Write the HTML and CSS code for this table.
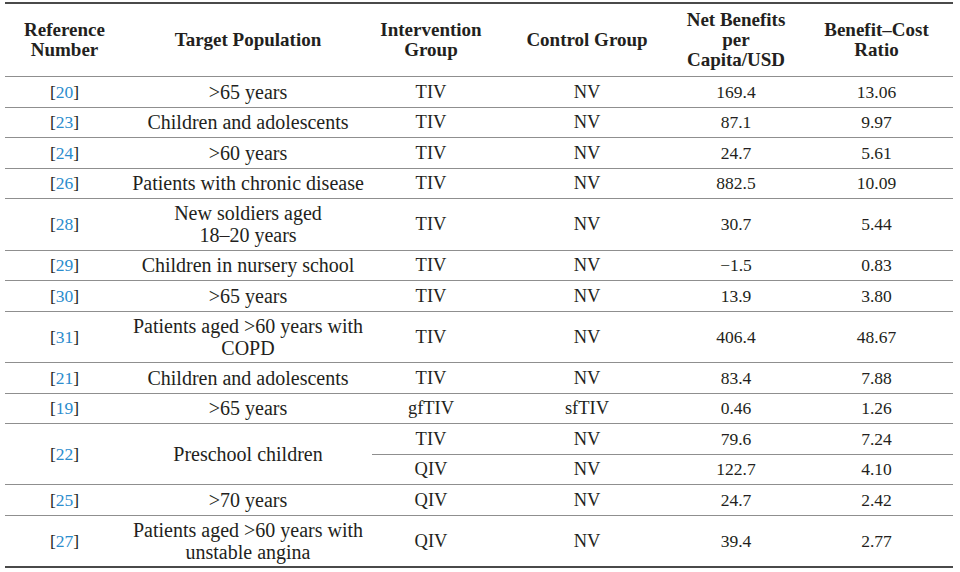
FILE: index.html
```html
<!DOCTYPE html>
<html lang="en">
<head>
<meta charset="utf-8">
<title>Benefit–Cost Table</title>
<link rel="stylesheet" href="styles.css">
</head>
<body>
<table class="tbl">
  <colgroup>
    <col class="c1"><col class="c2"><col class="c3"><col class="c4"><col class="c5"><col class="c6">
  </colgroup>
  <thead>
    <tr>
      <th>Reference<br>Number</th>
      <th>Target Population</th>
      <th>Intervention<br>Group</th>
      <th>Control Group</th>
      <th>Net Benefits<br>per<br>Capita/USD</th>
      <th class="last">Benefit–Cost<br>Ratio</th>
    </tr>
  </thead>
  <tbody>
    <tr><td class="ref">[<a>20</a>]</td><td>&gt;65 years</td><td class="v">TIV</td><td class="v">NV</td><td class="num">169.4</td><td class="num last">13.06</td></tr>
    <tr><td class="ref">[<a>23</a>]</td><td>Children and adolescents</td><td class="v">TIV</td><td class="v">NV</td><td class="num">87.1</td><td class="num last">9.97</td></tr>
    <tr><td class="ref">[<a>24</a>]</td><td>&gt;60 years</td><td class="v">TIV</td><td class="v">NV</td><td class="num">24.7</td><td class="num last">5.61</td></tr>
    <tr><td class="ref">[<a>26</a>]</td><td>Patients with chronic disease</td><td class="v">TIV</td><td class="v">NV</td><td class="num">882.5</td><td class="num last">10.09</td></tr>
    <tr class="tall"><td class="ref">[<a>28</a>]</td><td>New soldiers aged<br>18–20 years</td><td class="v">TIV</td><td class="v">NV</td><td class="num">30.7</td><td class="num last">5.44</td></tr>
    <tr><td class="ref">[<a>29</a>]</td><td>Children in nursery school</td><td class="v">TIV</td><td class="v">NV</td><td class="num">−1.5</td><td class="num last">0.83</td></tr>
    <tr><td class="ref">[<a>30</a>]</td><td>&gt;65 years</td><td class="v">TIV</td><td class="v">NV</td><td class="num">13.9</td><td class="num last">3.80</td></tr>
    <tr class="tall"><td class="ref">[<a>31</a>]</td><td>Patients aged &gt;60 years with<br>COPD</td><td class="v">TIV</td><td class="v">NV</td><td class="num">406.4</td><td class="num last">48.67</td></tr>
    <tr><td class="ref">[<a>21</a>]</td><td>Children and adolescents</td><td class="v">TIV</td><td class="v">NV</td><td class="num">83.4</td><td class="num last">7.88</td></tr>
    <tr><td class="ref">[<a>19</a>]</td><td>&gt;65 years</td><td class="v">gfTIV</td><td class="v">sfTIV</td><td class="num">0.46</td><td class="num last">1.26</td></tr>
    <tr><td class="ref" rowspan="2">[<a>22</a>]</td><td rowspan="2">Preschool children</td><td class="v">TIV</td><td class="v">NV</td><td class="num">79.6</td><td class="num last">7.24</td></tr>
    <tr><td class="v">QIV</td><td class="v">NV</td><td class="num">122.7</td><td class="num last">4.10</td></tr>
    <tr><td class="ref">[<a>25</a>]</td><td>&gt;70 years</td><td class="v">QIV</td><td class="v">NV</td><td class="num">24.7</td><td class="num last">2.42</td></tr>
    <tr class="tall"><td class="ref">[<a>27</a>]</td><td>Patients aged &gt;60 years with<br>unstable angina</td><td class="v">QIV</td><td class="v">NV</td><td class="num">39.4</td><td class="num last">2.77</td></tr>
  </tbody>
</table>
</body>
</html>
```

FILE: styles.css
```css
html, body {
  margin: 0;
  padding: 0;
  background: #ffffff;
}

body {
  padding: 2px 0 0 5px;
  font-family: "Liberation Serif", "Times New Roman", serif;
  color: #231f20;
}

.tbl {
  width: 948px;
  table-layout: fixed;
  border-collapse: collapse;
  border-top: 2px solid #4a4a4a;
  border-bottom: 2px solid #4a4a4a;
}

.c1 { width: 119px; }
.c2 { width: 248px; }
.c3 { width: 118px; }
.c4 { width: 194px; }
.c5 { width: 104px; }
.c6 { width: 165px; }

th {
  height: 72px;
  padding: 0;
  font-size: 19px;
  line-height: 20px;
  font-weight: bold;
  text-align: center;
  vertical-align: middle;
  white-space: nowrap;
  border-bottom: 1px solid #8f8f8f;
}

td {
  height: 29.5px;
  padding: 0;
  font-size: 20px;
  line-height: 22px;
  text-align: center;
  vertical-align: middle;
  white-space: nowrap;
  border-bottom: 1px solid #8f8f8f;
}

tbody tr:last-child td {
  border-bottom: none;
}

.tall td {
  height: 50.5px;
}

.last {
  padding-left: 12px;
}

.ref,
.num {
  font-size: 17.5px;
}

.v {
  font-size: 18.5px;
}

.ref a {
  color: #2b8ccd;
  text-decoration: none;
}
```
